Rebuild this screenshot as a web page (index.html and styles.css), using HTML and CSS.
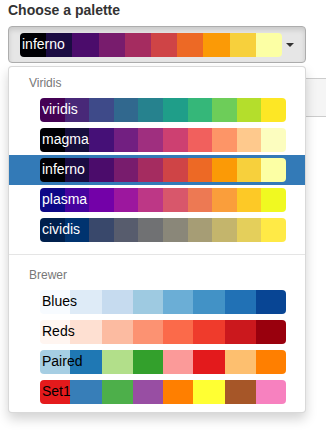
FILE: index.html
```html
<!DOCTYPE html>
<html lang="en">

<head>
  <meta charset="UTF-8" />
  <meta name="viewport" content="width=device-width, initial-scale=1.0" />
  <title>Palette picker</title>
  <link rel="stylesheet" href="styles.css">
</head>

<body>
  <div class="container">
    <div class="form-group">
      <label class="control-label">Choose a palette</label>

      <div class="picker">
        <button class="picker-btn" type="button">
          <div class="pal pal-inferno light">inferno</div>
          <span class="caret"></span>
        </button>

        <ul class="picker-menu">
          <li class="dropdown-header">Viridis</li>
          <li class="opt"><div class="pal pal-viridis light">viridis</div></li>
          <li class="opt"><div class="pal pal-magma light">magma</div></li>
          <li class="opt selected"><div class="pal pal-inferno light">inferno</div></li>
          <li class="opt"><div class="pal pal-plasma light">plasma</div></li>
          <li class="opt"><div class="pal pal-cividis light">cividis</div></li>

          <li class="divider"></li>

          <li class="dropdown-header">Brewer</li>
          <li class="opt"><div class="pal pal-blues">Blues</div></li>
          <li class="opt"><div class="pal pal-reds">Reds</div></li>
          <li class="opt"><div class="pal pal-paired">Paired</div></li>
          <li class="opt"><div class="pal pal-set1">Set1</div></li>
        </ul>
      </div>
    </div>

    <pre class="output"></pre>
  </div>
</body>

</html>
```

FILE: styles.css
```css
* {
  margin: 0;
  padding: 0;
  box-sizing: border-box;
}

html,
body {
  min-height: 435px;
}

body {
  font-family: "Liberation Sans", Arial, Helvetica, sans-serif;
  font-size: 14px;
  line-height: 1.42857;
  color: #333;
  background-color: white;
}

.container {
  padding: 1px 20px 0 8px;
}

.form-group {
  margin-bottom: 15px;
}

.control-label {
  display: block;
  font-weight: bold;
  margin-bottom: 5px;
}

.picker {
  position: relative;
}

.picker-btn {
  display: flex;
  align-items: center;
  width: 100%;
  padding: 6px 11px 5px 11px;
  background-color: #e6e6e6;
  border: 1px solid #adadad;
  border-radius: 4px;
  box-shadow: inset 0 3px 5px rgba(0, 0, 0, 0.125);
  font-family: inherit;
  font-size: 14px;
  text-align: left;
}

.picker-btn .pal {
  flex: 1;
}

.caret {
  width: 0;
  height: 0;
  margin-left: 4px;
  border-top: 4px solid #333;
  border-left: 4px solid transparent;
  border-right: 4px solid transparent;
}

/* menu abierto sobre el resto */
.picker-menu {
  position: absolute;
  top: 100%;
  left: 0;
  right: 0;
  z-index: 10;
  margin-top: 3px;
  padding: 5px 0;
  list-style: none;
  background-color: white;
  border: 1px solid rgba(0, 0, 0, 0.15);
  border-radius: 4px;
  box-shadow: 0 6px 12px rgba(0, 0, 0, 0.175);
}

.dropdown-header {
  padding: 3px 20px;
  font-size: 12px;
  line-height: 1.42857;
  color: #777;
}

.opt {
  padding: 3px 19px 3px 31px;
}

.opt.selected {
  background-color: #337ab7;
}

.divider {
  height: 1px;
  margin: 9px 0;
  background-color: #e5e5e5;
}

.pal {
  height: 24px;
  padding: 0 2px 2px;
  line-height: 22px;
  border-radius: 4px;
  font-size: 14px;
  color: black;
  white-space: nowrap;
}

.pal.light {
  color: white;
}

.output {
  margin-right: -20px;
  padding: 9.5px;
  min-height: 39px;
  font-family: "Liberation Mono", monospace;
  font-size: 13px;
  line-height: 1.42857;
  background-color: #f5f5f5;
  border: 1px solid #ccc;
  border-right: 0;
  border-radius: 4px 0 0 4px;
}

/* paletas */
.pal-viridis {
  background: linear-gradient(to right,
      #440154 0%, #440154 10%, #482878 10%, #482878 20%, #3e4a89 20%, #3e4a89 30%,
      #31688e 30%, #31688e 40%, #26828e 40%, #26828e 50%, #1f9e89 50%, #1f9e89 60%,
      #35b779 60%, #35b779 70%, #6dcd59 70%, #6dcd59 80%, #b4de2c 80%, #b4de2c 90%,
      #fde725 90%, #fde725 100%);
}

.pal-magma {
  background: linear-gradient(to right,
      #000004 0%, #000004 10%, #180f3e 10%, #180f3e 20%, #451077 20%, #451077 30%,
      #721f81 30%, #721f81 40%, #9f2f7f 40%, #9f2f7f 50%, #cd4071 50%, #cd4071 60%,
      #f1605d 60%, #f1605d 70%, #fd9567 70%, #fd9567 80%, #fec98d 80%, #fec98d 90%,
      #fcfdbf 90%, #fcfdbf 100%);
}

.pal-inferno {
  background: linear-gradient(to right,
      #000004 0%, #000004 10%, #1b0c42 10%, #1b0c42 20%, #4b0c6b 20%, #4b0c6b 30%,
      #781c6d 30%, #781c6d 40%, #a52c60 40%, #a52c60 50%, #cf4446 50%, #cf4446 60%,
      #ed6925 60%, #ed6925 70%, #fb9a06 70%, #fb9a06 80%, #f7d03c 80%, #f7d03c 90%,
      #fcffa4 90%, #fcffa4 100%);
}

.pal-plasma {
  background: linear-gradient(to right,
      #0d0887 0%, #0d0887 10%, #47039f 10%, #47039f 20%, #7301a8 20%, #7301a8 30%,
      #9c179e 30%, #9c179e 40%, #bd3786 40%, #bd3786 50%, #d8576b 50%, #d8576b 60%,
      #ed7953 60%, #ed7953 70%, #fa9e3b 70%, #fa9e3b 80%, #fdc926 80%, #fdc926 90%,
      #f0f921 90%, #f0f921 100%);
}

.pal-cividis {
  background: linear-gradient(to right,
      #00204d 0%, #00204d 10%, #00336f 10%, #00336f 20%, #39486b 20%, #39486b 30%,
      #575c6d 30%, #575c6d 40%, #707173 40%, #707173 50%, #8a8779 50%, #8a8779 60%,
      #a69d75 60%, #a69d75 70%, #c4b56c 70%, #c4b56c 80%, #e4cf5b 80%, #e4cf5b 90%,
      #ffea46 90%, #ffea46 100%);
}

.pal-blues {
  background: linear-gradient(to right,
      #f7fbff 0%, #f7fbff 12%, #deebf7 12%, #deebf7 25%, #c6dbef 25%, #c6dbef 38%,
      #9ecae1 38%, #9ecae1 50%, #6baed6 50%, #6baed6 62%, #4292c6 62%, #4292c6 75%,
      #2171b5 75%, #2171b5 88%, #084594 88%, #084594 100%);
}

.pal-reds {
  background: linear-gradient(to right,
      #fff5f0 0%, #fff5f0 12%, #fee0d2 12%, #fee0d2 25%, #fcbba1 25%, #fcbba1 38%,
      #fc9272 38%, #fc9272 50%, #fb6a4a 50%, #fb6a4a 62%, #ef3b2c 62%, #ef3b2c 75%,
      #cb181d 75%, #cb181d 88%, #99000d 88%, #99000d 100%);
}

.pal-paired {
  background: linear-gradient(to right,
      #a6cee3 0%, #a6cee3 12%, #1f78b4 12%, #1f78b4 25%, #b2df8a 25%, #b2df8a 38%,
      #33a02c 38%, #33a02c 50%, #fb9a99 50%, #fb9a99 62%, #e31a1c 62%, #e31a1c 75%,
      #fdbf6f 75%, #fdbf6f 88%, #ff7f00 88%, #ff7f00 100%);
}

.pal-set1 {
  background: linear-gradient(to right,
      #e41a1c 0%, #e41a1c 12%, #377eb8 12%, #377eb8 25%, #4daf4a 25%, #4daf4a 38%,
      #984ea3 38%, #984ea3 50%, #ff7f00 50%, #ff7f00 62%, #ffff33 62%, #ffff33 75%,
      #a65628 75%, #a65628 88%, #f781bf 88%, #f781bf 100%);
}
```
